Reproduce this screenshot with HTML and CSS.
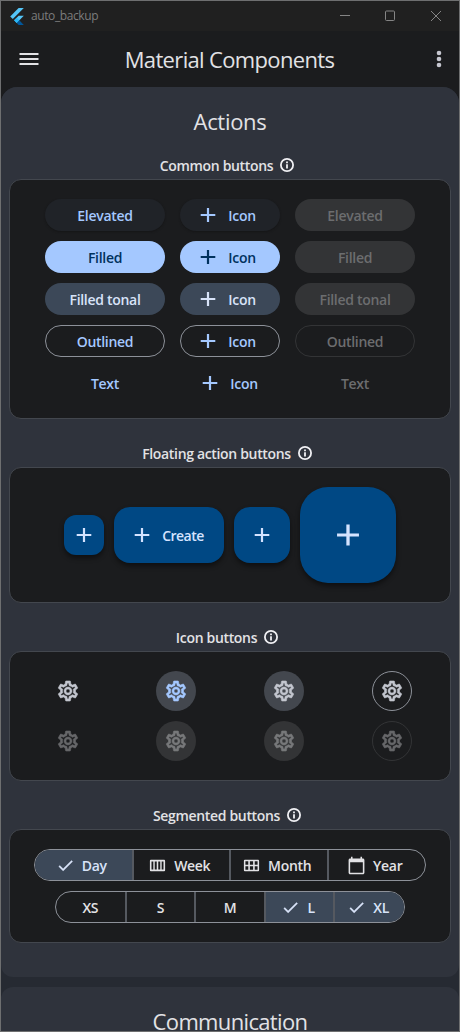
FILE: index.html
```html
<!DOCTYPE html>
<html lang="en">
<head>
<meta charset="utf-8">
<title>auto_backup</title>
<link rel="stylesheet" href="styles.css">
</head>
<body>
<svg class="sprite" aria-hidden="true">
  <symbol id="plus" viewBox="0 0 24 24"><path d="M19.300 13h-6.200v6h-2.200v-6H4.700v-2h6.200V5h2.200v6h6.200z"/></symbol>
  <symbol id="info" viewBox="0 0 16 16"><circle cx="8" cy="8" r="6.100" fill="none" stroke="currentColor" stroke-width="1.800"/><path d="M7.100 4.500h1.800v1.700H7.100zM7.100 7.200h1.800v4.300H7.100z"/></symbol>
  <symbol id="gear" viewBox="0 0 24 24"><path d="M19.430 12.980c.040-.320.070-.640.070-.980 0-.340-.030-.660-.070-.980l2.110-1.650c.190-.150.240-.420.120-.640l-2-3.460c-.090-.160-.260-.250-.440-.250-.060 0-.120.010-.170.030l-2.490 1c-.520-.400-1.080-.730-1.690-.980l-.380-2.650C14.460 2.180 14.250 2 14 2h-4c-.250 0-.460.180-.490.420l-.380 2.650c-.610.250-1.170.590-1.690.980l-2.490-1c-.060-.020-.120-.030-.180-.030-.170 0-.340.090-.430.250l-2 3.460c-.130.220-.070.490.120.640l2.110 1.650c-.040.320-.070.650-.070.980 0 .330.030.660.070.980l-2.110 1.650c-.190.150-.240.420-.120.640l2 3.460c.090.160.260.250.440.250.060 0 .120-.010.170-.030l2.490-1c.520.400 1.080.730 1.690.980l.380 2.650c.030.240.240.420.490.420h4c.250 0 .460-.180.490-.420l.380-2.650c.610-.250 1.170-.590 1.690-.980l2.490 1c.060.020.120.030.180.030.170 0 .340-.090.430-.250l2-3.460c.120-.220.070-.490-.120-.640l-2.110-1.650zm-1.980-1.710c.040.310.050.520.050.730 0 .210-.020.430-.050.730l-.140 1.130.890.700 1.080.840-.700 1.210-1.270-.510-1.040-.420-.900.680c-.430.320-.840.560-1.250.730l-1.060.430-.160 1.130-.200 1.350h-1.400l-.190-1.350-.160-1.130-1.060-.430c-.430-.180-.830-.410-1.230-.710l-.910-.700-1.060.430-1.270.510-.700-1.210 1.080-.840.890-.700-.140-1.130c-.030-.310-.050-.540-.050-.740s.020-.430.050-.730l.140-1.130-.890-.700-1.080-.840.700-1.210 1.270.510 1.040.420.900-.680c.430-.320.840-.560 1.250-.730l1.060-.430.160-1.130.200-1.350h1.390l.190 1.350.160 1.130 1.060.430c.430.180.830.410 1.230.710l.910.700 1.060-.430 1.270-.510.700 1.210-1.070.850-.890.700.140 1.130zM12 8c-2.210 0-4 1.790-4 4s1.790 4 4 4 4-1.790 4-4-1.790-4-4-4zm0 6c-1.100 0-2-.900-2-2s.900-2 2-2 2 .900 2 2-.900 2-2 2z"/></symbol>
  <symbol id="check" viewBox="0 0 24 24"><path d="M9 16.170L4.830 12l-1.420 1.410L9 19 21 7l-1.410-1.410z" stroke="currentColor" stroke-width=".4"/></symbol>
  <symbol id="week" viewBox="0 0 20 20"><path fill-rule="evenodd" d="M3 4h14q1 0 1 1v10q0 1-1 1H3q-1 0-1-1V5q0-1 1-1zM3.700 5.700v8.600h1.900V5.700zM7.100 5.700v8.600h2.100V5.700zM10.800 5.700v8.600h2.100V5.700zM14.400 5.700v8.600h1.900V5.700z"/></symbol>
  <symbol id="month" viewBox="0 0 20 20"><path fill-rule="evenodd" d="M3 4h14q1 0 1 1v10q0 1-1 1H3q-1 0-1-1V5q0-1 1-1zM3.600 5.600v3.500h3V5.600zM8.300 5.600v3.500h3.400V5.600zM13.400 5.600v3.500h3V5.600zM3.600 10.900v3.500h3v-3.500zM8.300 10.900v3.500h3.400v-3.500zM13.400 10.900v3.500h3v-3.500z"/></symbol>
  <symbol id="calendar" viewBox="0 0 24 24"><path d="M20 3h-1V1h-2v2H7V1H5v2H4c-1.100 0-2 .900-2 2v16c0 1.100.900 2 2 2h16c1.100 0 2-.900 2-2V5c0-1.100-.900-2-2-2zm0 18H4V8h16v13z"/></symbol>
</svg>

<div class="window">
  <div class="titlebar">
    <svg class="logo" viewBox="0 0 20 24"><path fill="#54c5f8" d="M12.300 0L.3 12 4 15.700 19.700 0z"/><path fill="#54c5f8" d="M12.300 11.070h7.400L9.550 21.200 5.850 17.530z"/><path fill="#01579b" d="M9.550 21.200l3.680-3.680L19.700 24h-7.400z"/><path fill="#29b6f6" d="M5.850 17.530l3.700-3.700 3.680 3.700-3.680 3.680z"/></svg>
    <span class="app-name">auto_backup</span>
    <svg class="controls" viewBox="0 0 104 12"><path d="M1 5.500h10M46.500 2q0-1 1-1h7q1 0 1 1v7.500q0 1-1 1h-7q-1 0-1-1zM92 1l10 10M102 1l-10 10"/></svg>
  </div>
  <header class="appbar">
    <svg class="menu" viewBox="0 0 24 24"><path d="M2.500 6h19v2h-19zM2.500 11h19v2h-19zM2.500 16h19v2h-19z"/></svg>
    <h1>Material Components</h1>
    <svg class="more" viewBox="0 0 24 24"><circle cx="12" cy="6" r="2.300"/><circle cx="12" cy="12" r="2.300"/><circle cx="12" cy="18" r="2.300"/></svg>
  </header>

  <main class="list">
    <section class="panel">
      <h2>Actions</h2>

      <h3><span>Common buttons</span><svg><use href="#info"/></svg></h3>
      <div class="card buttons">
        <button class="btn elevated">Elevated</button><button class="btn with-icon elevated"><svg><use href="#plus"/></svg>Icon</button><button class="btn disabled">Elevated</button>
        <button class="btn filled">Filled</button><button class="btn with-icon filled"><svg><use href="#plus"/></svg>Icon</button><button class="btn disabled">Filled</button>
        <button class="btn tonal">Filled tonal</button><button class="btn with-icon tonal"><svg><use href="#plus"/></svg>Icon</button><button class="btn disabled">Filled tonal</button>
        <button class="btn outlined">Outlined</button><button class="btn with-icon outlined"><svg><use href="#plus"/></svg>Icon</button><button class="btn outlined-off">Outlined</button>
        <button class="btn text">Text</button><button class="btn text"><svg><use href="#plus"/></svg>Icon</button><button class="btn text-off">Text</button>
      </div>

      <h3><span>Floating action buttons</span><svg><use href="#info"/></svg></h3>
      <div class="card fabs">
        <button class="fab small"><svg><use href="#plus"/></svg></button>
        <button class="fab extended"><svg><use href="#plus"/></svg>Create</button>
        <button class="fab"><svg><use href="#plus"/></svg></button>
        <button class="fab large"><svg><use href="#plus"/></svg></button>
      </div>

      <h3><span>Icon buttons</span><svg><use href="#info"/></svg></h3>
      <div class="card icons">
        <button class="ib"><svg><use href="#gear"/></svg></button>
        <button class="ib on"><svg><use href="#gear"/></svg></button>
        <button class="ib soft"><svg><use href="#gear"/></svg></button>
        <button class="ib ring"><svg><use href="#gear"/></svg></button>
        <button class="ib off"><svg><use href="#gear"/></svg></button>
        <button class="ib off off-fill"><svg><use href="#gear"/></svg></button>
        <button class="ib off off-fill"><svg><use href="#gear"/></svg></button>
        <button class="ib off off-ring"><svg><use href="#gear"/></svg></button>
      </div>

      <h3><span>Segmented buttons</span><svg><use href="#info"/></svg></h3>
      <div class="card segments">
        <div class="seg wide">
          <button class="sel"><svg><use href="#check"/></svg>Day</button>
          <button><svg><use href="#week"/></svg>Week</button>
          <button><svg><use href="#month"/></svg>Month</button>
          <button><svg><use href="#calendar"/></svg>Year</button>
        </div>
        <div class="seg">
          <button>XS</button>
          <button>S</button>
          <button>M</button>
          <button class="sel"><svg><use href="#check"/></svg>L</button>
          <button class="sel"><svg><use href="#check"/></svg>XL</button>
        </div>
      </div>
    </section>
    <section class="panel">
      <h2 class="communication">Communication</h2>
    </section>
  </main>
</div>
</body>
</html>
```

FILE: styles.css
```css
* { box-sizing: border-box; }
body { margin: 0; background: #1b1c1e; font-family: "Open Sans", "Noto Sans", sans-serif; color: #e2e2e5; }
h1, h2, h3 { margin: 0; font-weight: 400; }
svg { display: block; flex: none; fill: currentColor; }
button { border: 0; padding: 0; margin: 0; background: none; color: inherit; font: inherit; letter-spacing: inherit; white-space: nowrap; }
.sprite { position: absolute; width: 0; height: 0; }

.window { width: 460px; height: 1032px; border: 1px solid #6e6f70; overflow: hidden; display: flex; flex-direction: column; }
.titlebar { height: 30px; flex: none; background: #202020; display: flex; align-items: center; padding: 0 16px 0 9px; color: #7c7c7c; }
.logo { width: 14px; height: 17px; }
.app-name { margin-left: 7px; font-size: 12px; line-height: 16px; letter-spacing: -0.4px; }
.controls { width: 104px; height: 12px; margin-left: auto; fill: none; stroke: #858585; stroke-width: 1; }

.appbar { height: 56px; flex: none; display: flex; align-items: center; justify-content: space-between; padding: 0 8px 0 16px; }
.menu { width: 24px; height: 24px; }
.more { width: 24px; height: 24px; color: #c6c7d0; }
.appbar h1 { font-size: 22px; line-height: 28px; letter-spacing: -0.66px; margin-right: 9px; }

.list { flex: 1; min-height: 0; background: #262a32; border-radius: 16px 16px 0 0; overflow: hidden; display: flex; flex-direction: column; gap: 10px; }
.panel { flex: none; height: 890px; background: #2f333c; border-radius: 12px; padding: 0 8px; }
.panel h2 { height: 44px; padding-top: 20px; text-align: center; font-size: 22px; line-height: 28px; letter-spacing: -0.3px; }
.panel .communication { letter-spacing: -0.65px; }
.panel h3 { height: 48px; padding: 22px 5px 0 0; display: flex; align-items: center; justify-content: center; gap: 6px; font-size: 14px; line-height: 20px; font-weight: 600; letter-spacing: -0.33px; }
.panel h3 svg { width: 16px; height: 16px; margin-top: -2px; color: #f0f0f3; }

.card { background: #1b1c1e; border: 1px solid #43474e; border-radius: 12px; padding: 19px; font-size: 14px; font-weight: 600; line-height: 20px; letter-spacing: -0.3px; }
.buttons { display: grid; grid-template-columns: 120px 100px 120px; gap: 10px 15px; justify-content: center; }
.btn { height: 32px; border-radius: 16px; display: flex; align-items: center; justify-content: center; gap: 8px; padding-top: 2px; }
.btn svg { width: 24px; height: 24px; margin-top: -2px; margin-left: -4px; }
.with-icon { padding-right: 4px; }
.elevated { background: #202328; color: #a4c8ff; box-shadow: 0 1px 2px #1118; }
.filled { background: #a4c8ff; color: #00315d; }
.tonal { background: #3c4858; color: #d8e3f8; }
.outlined { border: 1px solid #8d9199; color: #a4c8ff; padding-top: 1px; }
.text { color: #a4c8ff; }
.disabled { background: #333436; color: #6c6d6f; }
.outlined-off { border: 1px solid #333436; color: #6c6d6f; padding-top: 1px; }
.text-off { color: #6c6d6f; }

.fabs { display: flex; align-items: center; justify-content: center; gap: 10px; }
.fab { width: 56px; height: 56px; border-radius: 16px; background: #004884; color: #d4e3ff; display: flex; align-items: center; justify-content: center; box-shadow: 0 3px 5px #0007; }
.fab svg { width: 24px; height: 24px; }
.small { width: 40px; height: 40px; border-radius: 12px; }
.extended { width: 110px; gap: 8px; padding: 2px 4px 0 0; letter-spacing: -0.5px; }
.extended svg { margin-top: -2px; }
.large { width: 96px; height: 96px; border-radius: 28px; }
.large svg { width: 36px; height: 36px; }

.icons { display: grid; grid-template-columns: repeat(4, 108px); gap: 10px 0; justify-content: center; justify-items: center; }
.ib { width: 40px; height: 40px; border-radius: 50%; display: flex; align-items: center; justify-content: center; color: #c3c6cf; }
.ib svg { width: 24px; height: 24px; stroke: currentColor; stroke-width: .6; }
.on { background: #43474e; color: #a4c8ff; }
.soft { background: #43474e; }
.ring { border: 1px solid #8d9199; }
.off { color: #666769; }
.off-fill { background: #333436; color: #77787a; }
.off-ring { border: 1px solid #333436; }

.segments { display: flex; flex-direction: column; align-items: center; gap: 10px; }
.seg { width: 350px; height: 32px; border: 1px solid #8d9199; border-radius: 16px; overflow: hidden; display: grid; grid-auto-flow: column; grid-auto-columns: minmax(0, 1fr); }
.wide { width: 392px; }
.seg button { display: flex; align-items: center; justify-content: center; gap: 7px; padding: 2px 0 0; border-left: 1px solid #555960; border-right: 1px solid #555960; }
.seg .sel { padding-right: 3px; }
.wide button, .wide .sel { padding-right: 4px; }
.seg button:first-child { border-left: 0; }
.seg button:last-child { border-right: 0; }
.seg svg { width: 19px; height: 19px; margin-top: -2px; }
.seg .sel { background: #3c4858; color: #d8e3f8; }
```
